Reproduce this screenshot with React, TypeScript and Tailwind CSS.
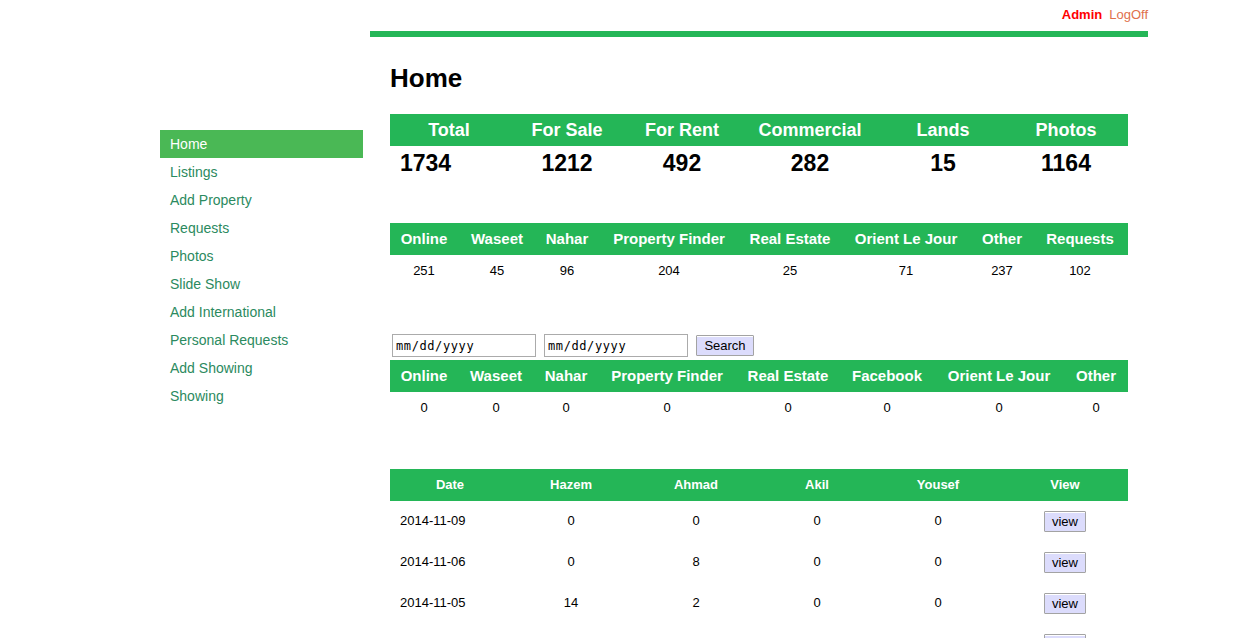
import React from "react";

const G = "bg-[#24b657]";

const nav = [
  "Home",
  "Listings",
  "Add Property",
  "Requests",
  "Photos",
  "Slide Show",
  "Add International",
  "Personal Requests",
  "Add Showing",
  "Showing",
];

function ViewBtn() {
  return (
    <button className="w-[42px] h-[21px] border border-[#a3a3a3] bg-[#dcdcfc] text-[13px] leading-[19px] text-black rounded-[1px] shadow-[inset_0_1px_0_#ffffff]">
      view
    </button>
  );
}

function DateBox() {
  return (
    <div className="w-[144px] h-[23px] border border-[#ababab] bg-white flex items-center pl-[3px] pt-[1px]">
      <span className="text-[12px] tracking-[0.6px] text-black" style={{ fontFamily: '"DejaVu Sans Mono", "Liberation Mono", monospace' }}>
        mm/dd/yyyy
      </span>
    </div>
  );
}

export default function App() {
  const t1h = ["Total", "For Sale", "For Rent", "Commercial", "Lands", "Photos"];
  const t1v = ["1734", "1212", "492", "282", "15", "1164"];
  const t2h = ["Online", "Waseet", "Nahar", "Property Finder", "Real Estate", "Orient Le Jour", "Other", "Requests"];
  const t2v = ["251", "45", "96", "204", "25", "71", "237", "102"];
  const t3h = ["Online", "Waseet", "Nahar", "Property Finder", "Real Estate", "Facebook", "Orient Le Jour", "Other"];
  const t3v = ["0", "0", "0", "0", "0", "0", "0", "0"];
  const t4h = ["Date", "Hazem", "Ahmad", "Akil", "Yousef", "View"];
  const rows = [
    ["2014-11-09", "0", "0", "0", "0"],
    ["2014-11-06", "0", "8", "0", "0"],
    ["2014-11-05", "14", "2", "0", "0"],
  ];

  return (
    <div
      className="h-screen overflow-hidden bg-white text-black"
      style={{ fontFamily: '"Liberation Sans", Arial, sans-serif' }}
    >
      <div className="ml-[370px] w-[778px]">
        <div className="h-[31px] pt-[7px] text-right text-[13px] leading-[15px]">
          <span className="font-bold text-[#ff0000]">Admin</span>
          <span className="ml-[7px] text-[#e0704c]">LogOff</span>
        </div>
        <div className={`h-[6px] ${G}`} />
      </div>

      <div className="flex ml-[160px]">
        <div className="w-[203px] mt-[93px] flex flex-col">
          {nav.map((n, i) => (
            <div
              key={n}
              className={`h-[28px] pl-[10px] flex items-center text-[14px] ${
                i === 0 ? "bg-[#4ab855] text-white" : "text-[#2b8a60]"
              }`}
            >
              {n}
            </div>
          ))}
        </div>

        <div className="ml-[7px] w-[778px] px-[20px]">
          <h1 className="mt-[26px] text-[26px] leading-[30px] font-bold">Home</h1>

          {/* Table 1 */}
          <div className="mt-[21px]">
            <div className={`grid grid-cols-[118px_118px_112px_144px_122px_124px] h-[32px] items-center ${G} text-white text-[18px] font-bold`}>
              {t1h.map((h) => (
                <div key={h} className="text-center whitespace-nowrap">{h}</div>
              ))}
            </div>
            <div className="grid grid-cols-[118px_118px_112px_144px_122px_124px] h-[29px] items-center text-[23px] font-bold">
              {t1v.map((v, i) => (
                <div key={i} className={i === 0 ? "pl-[10px]" : "text-center"}>{v}</div>
              ))}
            </div>
          </div>

          {/* Table 2 */}
          <div className="mt-[48px]">
            <div className={`grid grid-cols-[68px_78px_62px_142px_100px_132px_60px_96px] h-[32px] items-center ${G} text-white text-[15px] font-bold`}>
              {t2h.map((h) => (
                <div key={h} className="text-center whitespace-nowrap">{h}</div>
              ))}
            </div>
            <div className="grid grid-cols-[68px_78px_62px_142px_100px_132px_60px_96px] h-[30px] pt-[1px] items-center text-[13px]">
              {t2v.map((v, i) => (
                <div key={i} className="text-center">{v}</div>
              ))}
            </div>
          </div>

          {/* Search */}
          <div className="mt-[49px] flex items-center h-[23px] ml-[2px]">
            <DateBox />
            <div className="ml-[8px]">
              <DateBox />
            </div>
            <button className="ml-[8px] w-[58px] h-[21px] border border-[#a3a3a3] bg-[#dcdcfc] text-[13px] leading-[19px] text-black rounded-[1px] shadow-[inset_0_1px_0_#ffffff]">
              Search
            </button>
          </div>

          {/* Table 3 */}
          <div className="mt-[3px]">
            <div className={`grid grid-cols-[68px_76px_64px_138px_104px_94px_130px_64px] h-[32px] items-center ${G} text-white text-[15px] font-bold`}>
              {t3h.map((h, i) => (
                <div key={i} className="text-center whitespace-nowrap">{h}</div>
              ))}
            </div>
            <div className="grid grid-cols-[68px_76px_64px_138px_104px_94px_130px_64px] h-[30px] pt-[1px] items-center text-[13px]">
              {t3v.map((v, i) => (
                <div key={i} className="text-center">{v}</div>
              ))}
            </div>
          </div>

          {/* Table 4 */}
          <div className="mt-[47px]">
            <div className={`grid grid-cols-[120px_122px_128px_114px_128px_126px] h-[32px] items-center ${G} text-white text-[13px] font-bold`}>
              {t4h.map((h) => (
                <div key={h} className="text-center">{h}</div>
              ))}
            </div>
            {rows.map((r, ri) => (
              <div key={ri} className="grid grid-cols-[120px_122px_128px_114px_128px_126px] h-[41px] items-center text-[13px] pb-[1px]">
                {r.map((v, i) => (
                  <div key={i} className={i === 0 ? "pl-[10px]" : "text-center"}>{v}</div>
                ))}
                <div className="flex justify-center">
                  <ViewBtn />
                </div>
              </div>
            ))}
            <div className="grid grid-cols-[120px_122px_128px_114px_128px_126px] h-[41px] items-center">
              <div className="col-start-6 flex justify-center">
                <ViewBtn />
              </div>
            </div>
          </div>
        </div>
      </div>
    </div>
  );
}
